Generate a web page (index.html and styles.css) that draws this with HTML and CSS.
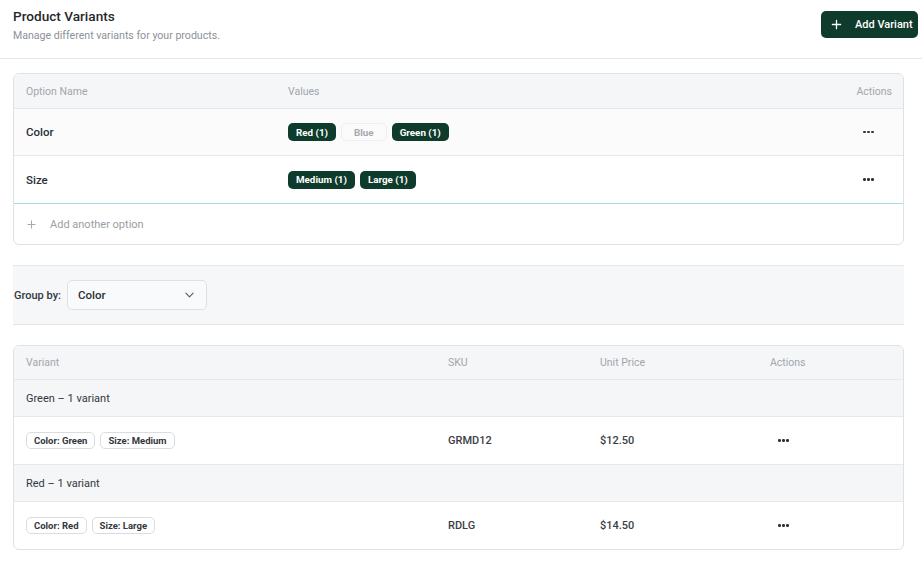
FILE: index.html
```html
<!DOCTYPE html>
<html lang="en">
<head>
<meta charset="utf-8">
<title>Product Variants</title>
<link rel="stylesheet" href="styles.css">
</head>
<body>
<header class="top">
  <div class="titles">
    <h1 class="title">Product Variants</h1>
    <p class="subtitle">Manage different variants for your products.</p>
  </div>
  <button class="btn-primary">
    <svg class="plus" viewBox="0 0 12 12" width="11" height="11"><path d="M6 1.5v9M1.5 6h9" stroke="currentColor" stroke-width="1.4" stroke-linecap="round" fill="none"/></svg>
    <span>Add Variant</span>
  </button>
</header>

<main class="content">
  <section class="card">
    <div class="opt-row opt-head">
      <div class="cell">Option Name</div>
      <div class="cell">Values</div>
      <div class="cell right">Actions</div>
    </div>
    <div class="opt-row opt-body tint">
      <div class="cell label">Color</div>
      <div class="cell chips">
        <span class="chip on">Red (1)</span>
        <span class="chip off">Blue</span>
        <span class="chip on">Green (1)</span>
      </div>
      <div class="cell right"><span class="dots dots-opt"><i></i><i></i><i></i></span></div>
    </div>
    <div class="opt-row opt-body accent">
      <div class="cell label">Size</div>
      <div class="cell chips">
        <span class="chip on">Medium (1)</span>
        <span class="chip on">Large (1)</span>
      </div>
      <div class="cell right"><span class="dots dots-opt"><i></i><i></i><i></i></span></div>
    </div>
    <div class="add-row">
      <svg class="add-plus" viewBox="0 0 10 10" width="9" height="9"><path d="M5 1v8M1 5h8" stroke="currentColor" stroke-width="1.2" stroke-linecap="round" fill="none"/></svg>
      <span>Add another option</span>
    </div>
  </section>

  <section class="group-bar">
    <span class="group-label">Group by:</span>
    <div class="select">
      <span>Color</span>
      <svg viewBox="0 0 10 6" width="9" height="6"><path d="M1 1l4 4 4-4" stroke="currentColor" stroke-width="1.3" fill="none" stroke-linecap="round" stroke-linejoin="round"/></svg>
    </div>
  </section>

  <section class="card">
    <div class="var-row var-head">
      <div class="cell">Variant</div>
      <div class="cell">SKU</div>
      <div class="cell">Unit Price</div>
      <div class="cell">Actions</div>
    </div>
    <div class="group-row">Green – 1 variant</div>
    <div class="var-row var-body">
      <div class="cell chips">
        <span class="tag">Color: Green</span>
        <span class="tag">Size: Medium</span>
      </div>
      <div class="cell val">GRMD12</div>
      <div class="cell val">$12.50</div>
      <div class="cell"><span class="dots dots-var"><i></i><i></i><i></i></span></div>
    </div>
    <div class="group-row">Red – 1 variant</div>
    <div class="var-row var-body last">
      <div class="cell chips">
        <span class="tag">Color: Red</span>
        <span class="tag">Size: Large</span>
      </div>
      <div class="cell val">RDLG</div>
      <div class="cell val">$14.50</div>
      <div class="cell"><span class="dots dots-var"><i></i><i></i><i></i></span></div>
    </div>
  </section>
</main>
</body>
</html>
```

FILE: styles.css
```css
* { box-sizing: border-box; }
html, body { margin: 0; padding: 0; background: #ffffff; }
body {
  font-family: Roboto, "Liberation Sans", Arial, sans-serif;
  color: #2b2f36;
  width: 922px;
}

.top {
  display: flex;
  justify-content: space-between;
  align-items: flex-start;
  height: 59px;
  padding: 6px 4px 0 13px;
  border-bottom: 1px solid #e4e6ea;
}
.title {
  margin: 0;
  font-size: 13.6px;
  font-weight: 500;
  color: #25282d;
  line-height: 20px;
}
.subtitle {
  margin: 3px 0 0;
  font-size: 10.6px;
  color: #8d9198;
  line-height: 14px;
}
.btn-primary {
  margin-top: 5px;
  width: 97px;
  height: 27px;
  border: none;
  border-radius: 5px;
  background: #0e3b2b;
  color: #ffffff;
  font-family: inherit;
  font-size: 11px;
  font-weight: 500;
  display: flex;
  align-items: center;
  gap: 13px;
  padding: 0 0 0 10px;
}
.btn-primary .plus { flex: none; }

.content {
  padding: 14px 18px 0 13px;
  display: flex;
  flex-direction: column;
  gap: 20px;
}

.card {
  border: 1px solid #dde2e7;
  border-radius: 6px;
  overflow: hidden;
  background: #ffffff;
}

.cell { padding: 0 12px; }
.right { text-align: right; }

.opt-row {
  display: grid;
  grid-template-columns: 262px 1fr 120px;
  align-items: center;
  border-bottom: 1px solid #e6e9ec;
}
.opt-head {
  height: 35px;
  background: #f5f6f7;
  font-size: 10.5px;
  color: #a2a6ad;
}
.opt-head .right { padding-right: 11px; }
.opt-body { height: 47px; }
.opt-body .right { display: flex; justify-content: flex-end; align-items: center; }
.opt-body.tint { background: #fbfbfc; }
.opt-body.accent { height: 48px; border-bottom-color: #a6dbe1; }
.label { font-size: 11.5px; font-weight: 500; color: #2b2f36; }

.chips { display: flex; align-items: center; gap: 5px; }
.chip {
  display: inline-flex;
  align-items: center;
  height: 18px;
  padding: 0 8px;
  border-radius: 5px;
  font-size: 9.8px;
  font-weight: 700;
}
.chip.on { background: #0e3b2b; color: #ffffff; }
.chip.off {
  background: transparent;
  color: #a5a9b0;
  border: 1px solid #eceef1;
  padding: 0 12px;
}

.dots { display: inline-flex; gap: 1.5px; align-items: center; }
.dots i {
  width: 2.6px;
  height: 2.6px;
  border-radius: 50%;
  background: #2e323a;
}
.dots-opt { margin-right: 17px; }
.dots-var { margin-left: 8px; }

.add-row {
  height: 40px;
  display: flex;
  align-items: center;
  padding-left: 13px;
  gap: 14px;
  font-size: 11px;
  color: #9a9ea5;
}
.add-plus { color: #a7abb1; }

.group-bar {
  height: 60px;
  background: #f6f7f8;
  border-top: 1px solid #e3e6ea;
  border-bottom: 1px solid #e3e6ea;
  display: flex;
  align-items: center;
  gap: 6px;
  padding-left: 1px;
}
.group-label { font-size: 11px; font-weight: 500; color: #33373e; }
.select {
  width: 140px;
  height: 30px;
  border: 1px solid #dde1e6;
  border-radius: 5px;
  background: #f9fafb;
  display: flex;
  align-items: center;
  justify-content: space-between;
  padding: 0 12px 0 10px;
  font-size: 11.5px;
  font-weight: 500;
  color: #2b2f36;
}
.select svg { color: #5a5f67; }

.var-row {
  display: grid;
  grid-template-columns: 422px 152px 170px 1fr;
  align-items: center;
}
.var-row .cell:last-child { display: flex; align-items: center; }
.var-head {
  height: 34px;
  background: #f5f6f7;
  font-size: 10.5px;
  color: #a2a6ad;
  border-bottom: 1px solid #e6e9ec;
}
.group-row {
  height: 37px;
  display: flex;
  align-items: center;
  padding-left: 12px;
  background: #f5f6f7;
  font-size: 11px;
  color: #33373e;
  border-bottom: 1px solid #e6e9ec;
}
.var-body { height: 48px; border-bottom: 1px solid #e6e9ec; }
.var-body.last { height: 47px; border-bottom: none; }
.val { font-size: 11px; font-weight: 500; color: #3a3e45; }

.tag {
  display: inline-flex;
  align-items: center;
  height: 17px;
  padding: 0 7px;
  border: 1px solid #d9dde2;
  border-radius: 5px;
  background: #ffffff;
  font-size: 9.5px;
  font-weight: 700;
  color: #33373e;
}
```
